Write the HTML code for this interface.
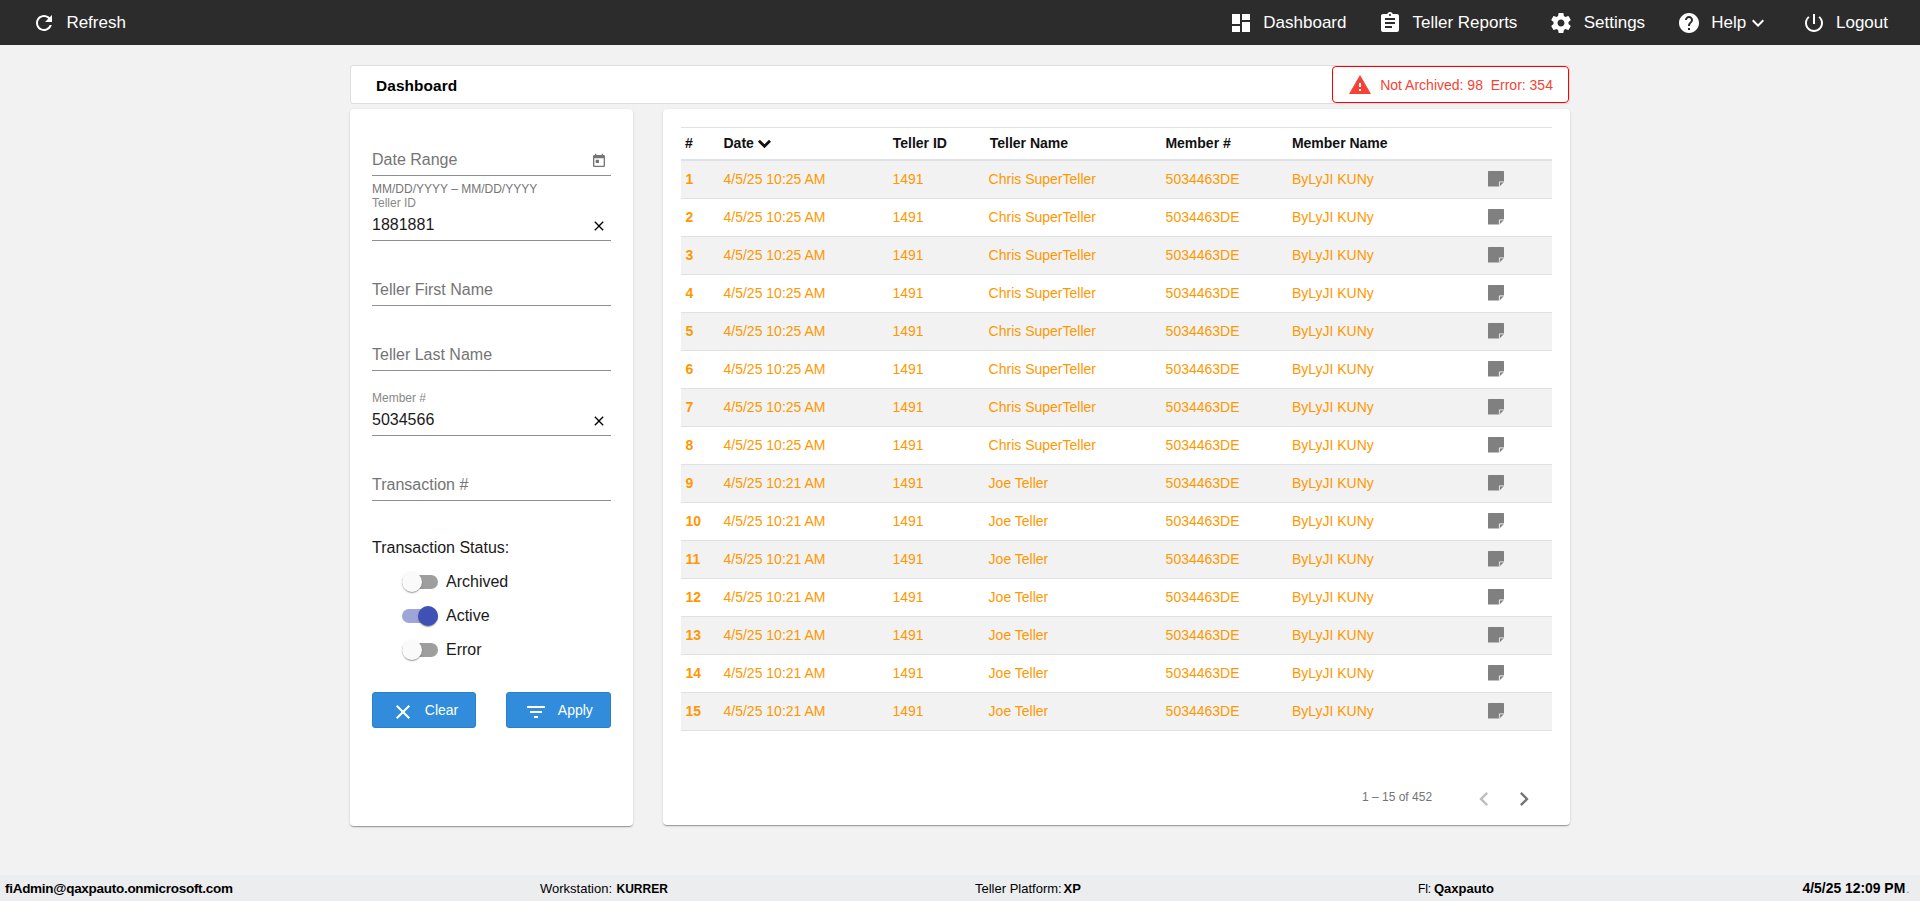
<!DOCTYPE html>
<html><head><meta charset="utf-8"><title>Dashboard</title>
<style>
html,body{margin:0;padding:0}
body{width:1920px;height:901px;overflow:hidden;background:#f2f2f2;position:relative;
 font-family:"Liberation Sans",sans-serif;}
.t{position:absolute;white-space:pre;}
.i{position:absolute;display:block}
.box{position:absolute;box-sizing:border-box}
.card{position:absolute;background:#fff;border-radius:4px;
 box-shadow:0 2px 1px -1px rgba(0,0,0,.2),0 1px 1px 0 rgba(0,0,0,.14),0 1px 3px 0 rgba(0,0,0,.12)}
.ul{position:absolute;left:372px;width:239px;height:1px;background:#8f8f8f}
.row{position:absolute;left:681px;width:871px;height:37px;border-bottom:1px solid #dee2e6}
.odd{background:#f2f2f2}
</style></head><body>

<div class="box" style="left:0;top:0;width:1920px;height:45px;background:#2c2c2c"></div>
<svg class="i" style="left:31.5px;top:10.7px;" width="24" height="24" viewBox="0 0 24 24"><path fill="#fff" d="M17.65 6.35C16.2 4.9 14.21 4 12 4c-4.42 0-7.99 3.58-7.99 8s3.57 8 7.99 8c3.73 0 6.84-2.55 7.73-6h-2.08c-.82 2.33-3.04 4-5.65 4-3.31 0-6-2.69-6-6s2.69-6 6-6c1.66 0 3.14.69 4.22 1.78L13 11h7V4l-2.35 2.35z"/></svg>
<div class="t" style="left:66.4px;top:13px;font-size:17px;line-height:19px;color:#fff;font-weight:400;">Refresh</div>
<svg class="i" style="left:1228.8px;top:10.8px;" width="24" height="24" viewBox="0 0 24 24"><path fill="#fff" d="M3 13h8V3H3v10zm0 8h8v-6H3v6zm10 0h8V11h-8v10zm0-18v6h8V3h-8z"/></svg>
<div class="t" style="left:1263.3px;top:13px;font-size:17px;line-height:19px;color:#fff;font-weight:400;">Dashboard</div>
<svg class="i" style="left:1378px;top:10.8px;" width="24" height="24" viewBox="0 0 24 24"><path fill="#fff" d="M19 3h-4.18C14.4 1.84 13.3 1 12 1c-1.3 0-2.4.84-2.82 2H5c-1.1 0-2 .9-2 2v14c0 1.1.9 2 2 2h14c1.1 0 2-.9 2-2V5c0-1.1-.9-2-2-2zm-7 0c.55 0 1 .45 1 1s-.45 1-1 1-1-.45-1-1 .45-1 1-1zm2 14H7v-2h7v2zm3-4H7v-2h10v2zm0-4H7V7h10v2z"/></svg>
<div class="t" style="left:1412.5px;top:13px;font-size:17px;line-height:19px;color:#fff;font-weight:400;">Teller Reports</div>
<svg class="i" style="left:1548.8px;top:10.9px;" width="24" height="24" viewBox="0 0 24 24"><path fill="#fff" d="M19.43 12.98c.04-.32.07-.64.07-.98s-.03-.66-.07-.98l2.11-1.65c.19-.15.24-.42.12-.64l-2-3.46c-.12-.22-.39-.3-.61-.22l-2.49 1c-.52-.4-1.08-.73-1.69-.98l-.38-2.65C14.46 2.18 14.25 2 14 2h-4c-.25 0-.46.18-.49.42l-.38 2.65c-.61.25-1.17.59-1.69.98l-2.49-1c-.23-.09-.49 0-.61.22l-2 3.46c-.13.22-.07.49.12.64l2.11 1.65c-.04.32-.07.65-.07.98s.03.66.07.98l-2.11 1.65c-.19.15-.24.42-.12.64l2 3.46c.12.22.39.3.61.22l2.49-1c.52.4 1.08.73 1.69.98l.38 2.65c.03.24.24.42.49.42h4c.25 0 .46-.18.49-.42l.38-2.65c.61-.25 1.17-.59 1.69-.98l2.49 1c.23.09.49 0 .61-.22l2-3.46c.12-.22.07-.49-.12-.64l-2.11-1.65zM12 15.5c-1.93 0-3.5-1.57-3.5-3.5s1.57-3.5 3.5-3.5 3.5 1.57 3.5 3.5-1.57 3.5-3.5 3.5z"/></svg>
<div class="t" style="left:1583.7px;top:13px;font-size:17px;line-height:19px;color:#fff;font-weight:400;">Settings</div>
<svg class="i" style="left:1676.5px;top:10.8px;" width="24" height="24" viewBox="0 0 24 24"><path fill="#fff" d="M12 2C6.48 2 2 6.48 2 12s4.48 10 10 10 10-4.48 10-10S17.52 2 12 2zm1 17h-2v-2h2v2zm2.07-7.75l-.9.92C13.45 12.9 13 13.5 13 15h-2v-.5c0-1.1.45-2.1 1.17-2.83l1.24-1.26c.37-.36.59-.86.59-1.41 0-1.1-.9-2-2-2s-2 .9-2 2H8c0-2.21 1.79-4 4-4s4 1.79 4 4c0 .88-.36 1.68-.93 2.25z"/></svg>
<div class="t" style="left:1711.2px;top:13px;font-size:17px;line-height:19px;color:#fff;font-weight:400;">Help</div>
<svg class="i" style="left:1746.2px;top:10.7px;" width="24" height="24" viewBox="0 0 24 24"><path fill="#fff" d="M16.59 8.59L12 13.17 7.41 8.59 6 10l6 6 6-6z"/></svg>
<svg class="i" style="left:1801.6px;top:10.8px;" width="24" height="24" viewBox="0 0 24 24"><path fill="#fff" d="M13 3h-2v10h2V3zm4.83 2.17l-1.42 1.42C17.99 7.86 19 9.81 19 12c0 3.87-3.13 7-7 7s-7-3.13-7-7c0-2.19 1.01-4.14 2.58-5.42L6.17 5.17C4.23 6.82 3 9.26 3 12c0 4.97 4.03 9 9 9s9-4.03 9-9c0-2.74-1.23-5.18-3.17-6.83z"/></svg>
<div class="t" style="left:1836px;top:13px;font-size:17px;line-height:19px;color:#fff;font-weight:400;">Logout</div>
<div class="box" style="left:350px;top:65px;width:1220px;height:39px;background:#fff;border:1px solid #dedede;border-radius:3px"></div>
<div class="t" style="left:376.1px;top:77px;font-size:15.4px;line-height:17px;color:#000;font-weight:700;letter-spacing:.08px">Dashboard</div>
<div class="box" style="left:1332px;top:66px;width:237px;height:37px;background:#fff;border:1px solid #ff0000;border-radius:4px"></div>
<svg class="i" style="left:1348.1px;top:73.4px;" width="24" height="24" viewBox="0 0 24 24"><path fill="#f44336" d="M1 21h22L12 2 1 21zm12-3h-2v-2h2v2zm0-4h-2v-4h2v4z"/></svg>
<div class="t" style="left:1380.2px;top:77px;font-size:14px;line-height:16px;color:#f44336;font-weight:400;">Not Archived: 98  Error: 354</div>
<div class="card" style="left:350px;top:109px;width:283px;height:717px"></div>
<div class="ul" style="top:175px"></div>
<div class="ul" style="top:240px"></div>
<div class="ul" style="top:305px"></div>
<div class="ul" style="top:370px"></div>
<div class="ul" style="top:435px"></div>
<div class="ul" style="top:500px"></div>
<div class="t" style="left:372px;top:151px;font-size:16px;line-height:17px;color:#757575;font-weight:400;">Date Range</div>
<svg class="i" style="left:591px;top:153.2px;" width="16" height="16" viewBox="0 0 24 24"><path fill="#757575" d="M19 3h-1V1h-2v2H8V1H6v2H5c-1.11 0-1.99.9-1.99 2L3 19c0 1.1.89 2 2 2h14c1.1 0 2-.9 2-2V5c0-1.1-.9-2-2-2zm0 16H5V8h14v11zM7 10h5v5H7z"/></svg>
<div class="t" style="left:372px;top:182px;font-size:12px;line-height:14px;color:#757575;font-weight:400;">MM/DD/YYYY – MM/DD/YYYY</div>
<div class="t" style="left:372px;top:196px;font-size:12px;line-height:14px;color:#888;font-weight:400;">Teller ID</div>
<div class="t" style="left:372px;top:216px;font-size:16px;line-height:17px;color:#1a1a1a;font-weight:400;">1881881</div>
<svg class="i" style="left:590.9px;top:217.9px;" width="16" height="16" viewBox="0 0 24 24"><path fill="#000" d="M19 6.41L17.59 5 12 10.59 6.41 5 5 6.41 10.59 12 5 17.59 6.41 19 12 13.41 17.59 19 19 17.59 13.41 12z"/></svg>
<div class="t" style="left:372px;top:281px;font-size:16px;line-height:17px;color:#757575;font-weight:400;">Teller First Name</div>
<div class="t" style="left:372px;top:346px;font-size:16px;line-height:17px;color:#757575;font-weight:400;">Teller Last Name</div>
<div class="t" style="left:372px;top:391px;font-size:12px;line-height:14px;color:#888;font-weight:400;">Member #</div>
<div class="t" style="left:372px;top:411px;font-size:16px;line-height:17px;color:#1a1a1a;font-weight:400;">5034566</div>
<svg class="i" style="left:590.9px;top:412.9px;" width="16" height="16" viewBox="0 0 24 24"><path fill="#000" d="M19 6.41L17.59 5 12 10.59 6.41 5 5 6.41 10.59 12 5 17.59 6.41 19 12 13.41 17.59 19 19 17.59 13.41 12z"/></svg>
<div class="t" style="left:372px;top:476px;font-size:16px;line-height:17px;color:#757575;font-weight:400;">Transaction #</div>
<div class="t" style="left:372px;top:539px;font-size:16px;line-height:17px;color:#1a1a1a;font-weight:400;">Transaction Status:</div>
<div class="box" style="left:402px;top:575px;width:36px;height:14px;border-radius:7px;background:#9e9e9e"></div><div class="box" style="left:402px;top:572px;width:20px;height:20px;border-radius:50%;background:#fafafa;box-shadow:0 2px 1px -1px rgba(0,0,0,.2),0 1px 1px 0 rgba(0,0,0,.14),0 1px 3px 0 rgba(0,0,0,.12)"></div>
<div class="t" style="left:446px;top:573px;font-size:16px;line-height:17px;color:#1a1a1a;font-weight:400;">Archived</div>
<div class="box" style="left:402px;top:609px;width:36px;height:14px;border-radius:7px;background:#9ea5da"></div><div class="box" style="left:418px;top:606px;width:20px;height:20px;border-radius:50%;background:#3f51b5;box-shadow:0 2px 1px -1px rgba(0,0,0,.2),0 1px 1px 0 rgba(0,0,0,.14),0 1px 3px 0 rgba(0,0,0,.12)"></div>
<div class="t" style="left:446px;top:607px;font-size:16px;line-height:17px;color:#1a1a1a;font-weight:400;">Active</div>
<div class="box" style="left:402px;top:643px;width:36px;height:14px;border-radius:7px;background:#9e9e9e"></div><div class="box" style="left:402px;top:640px;width:20px;height:20px;border-radius:50%;background:#fafafa;box-shadow:0 2px 1px -1px rgba(0,0,0,.2),0 1px 1px 0 rgba(0,0,0,.14),0 1px 3px 0 rgba(0,0,0,.12)"></div>
<div class="t" style="left:446px;top:641px;font-size:16px;line-height:17px;color:#1a1a1a;font-weight:400;">Error</div>
<div class="box" style="left:372px;top:692px;width:104px;height:36px;background:#318ddc;border:1px solid #2b80ca;border-radius:3px"></div>
<svg class="i" style="left:390.6px;top:700.1px;" width="24" height="24" viewBox="0 0 24 24"><path fill="#fff" d="M19 6.41L17.59 5 12 10.59 6.41 5 5 6.41 10.59 12 5 17.59 6.41 19 12 13.41 17.59 19 19 17.59 13.41 12z"/></svg>
<div class="t" style="left:424.8px;top:702px;font-size:14px;line-height:16px;color:#fff;font-weight:400;">Clear</div>
<div class="box" style="left:506px;top:692px;width:105px;height:36px;background:#318ddc;border:1px solid #2b80ca;border-radius:3px"></div>
<svg class="i" style="left:523.8px;top:700px;" width="24" height="24" viewBox="0 0 24 24"><path fill="#fff" d="M10 18h4v-2h-4v2zM3 6v2h18V6H3zm3 7h12v-2H6v2z"/></svg>
<div class="t" style="left:557.8px;top:702px;font-size:14px;line-height:16px;color:#fff;font-weight:400;">Apply</div>
<div class="card" style="left:663px;top:109px;width:907px;height:716px"></div>
<div class="box" style="left:681px;top:127px;width:871px;height:1px;background:#dee2e6"></div>
<div class="box" style="left:681px;top:159px;width:871px;height:2px;background:#dee2e6"></div>
<div class="t" style="left:685px;top:135px;font-size:14px;line-height:16px;color:#111;font-weight:700;">#</div>
<div class="t" style="left:723.5px;top:135px;font-size:14px;line-height:16px;color:#111;font-weight:700;">Date</div>
<svg class="i" style="left:757px;top:138px" width="15" height="12" viewBox="0 0 15 12"><path d="M1.9 2.7 L7.45 8.2 L13 2.7" fill="none" stroke="#111" stroke-width="2.8"/></svg>
<div class="t" style="left:892.7px;top:135px;font-size:14px;line-height:16px;color:#111;font-weight:700;">Teller ID</div>
<div class="t" style="left:989.7px;top:135px;font-size:14px;line-height:16px;color:#111;font-weight:700;">Teller Name</div>
<div class="t" style="left:1165.4px;top:135px;font-size:14px;line-height:16px;color:#111;font-weight:700;">Member #</div>
<div class="t" style="left:1291.9px;top:135px;font-size:14px;line-height:16px;color:#111;font-weight:700;">Member Name</div>
<div class="row odd" style="top:161px"></div>
<div class="t" style="left:685.4px;top:171px;font-size:14px;line-height:16px;color:#ff9800;font-weight:700;">1</div>
<div class="t" style="left:723.5px;top:171px;font-size:14px;line-height:16px;color:#ff9800;font-weight:400;">4/5/25 10:25 AM</div>
<div class="t" style="left:892.5px;top:171px;font-size:14px;line-height:16px;color:#ff9800;font-weight:400;">1491</div>
<div class="t" style="left:988.6px;top:171px;font-size:14px;line-height:16px;color:#ff9800;font-weight:400;">Chris SuperTeller</div>
<div class="t" style="left:1165.6px;top:171px;font-size:14px;line-height:16px;color:#ff9800;font-weight:400;">5034463DE</div>
<div class="t" style="left:1291.9px;top:171px;font-size:14px;line-height:16px;color:#ff9800;font-weight:400;">ByLyJI KUNy</div>
<svg class="i" style="left:1488px;top:170.8px" width="16" height="16" viewBox="0 0 16 16"><path fill="#808080" d="M0.6 0h14.8a.6.6 0 0 1 .6.6V11L11.5 15.5H0.6a.6.6 0 0 1-.6-.6V.6a.6.6 0 0 1 .6-.6z"/><path fill="none" stroke="#f2f2f2" stroke-width="0.9" d="M11.4 15.6V10.9H16"/></svg>
<div class="row" style="top:199px"></div>
<div class="t" style="left:685.4px;top:209px;font-size:14px;line-height:16px;color:#ff9800;font-weight:700;">2</div>
<div class="t" style="left:723.5px;top:209px;font-size:14px;line-height:16px;color:#ff9800;font-weight:400;">4/5/25 10:25 AM</div>
<div class="t" style="left:892.5px;top:209px;font-size:14px;line-height:16px;color:#ff9800;font-weight:400;">1491</div>
<div class="t" style="left:988.6px;top:209px;font-size:14px;line-height:16px;color:#ff9800;font-weight:400;">Chris SuperTeller</div>
<div class="t" style="left:1165.6px;top:209px;font-size:14px;line-height:16px;color:#ff9800;font-weight:400;">5034463DE</div>
<div class="t" style="left:1291.9px;top:209px;font-size:14px;line-height:16px;color:#ff9800;font-weight:400;">ByLyJI KUNy</div>
<svg class="i" style="left:1488px;top:208.8px" width="16" height="16" viewBox="0 0 16 16"><path fill="#808080" d="M0.6 0h14.8a.6.6 0 0 1 .6.6V11L11.5 15.5H0.6a.6.6 0 0 1-.6-.6V.6a.6.6 0 0 1 .6-.6z"/><path fill="none" stroke="#fff" stroke-width="0.9" d="M11.4 15.6V10.9H16"/></svg>
<div class="row odd" style="top:237px"></div>
<div class="t" style="left:685.4px;top:247px;font-size:14px;line-height:16px;color:#ff9800;font-weight:700;">3</div>
<div class="t" style="left:723.5px;top:247px;font-size:14px;line-height:16px;color:#ff9800;font-weight:400;">4/5/25 10:25 AM</div>
<div class="t" style="left:892.5px;top:247px;font-size:14px;line-height:16px;color:#ff9800;font-weight:400;">1491</div>
<div class="t" style="left:988.6px;top:247px;font-size:14px;line-height:16px;color:#ff9800;font-weight:400;">Chris SuperTeller</div>
<div class="t" style="left:1165.6px;top:247px;font-size:14px;line-height:16px;color:#ff9800;font-weight:400;">5034463DE</div>
<div class="t" style="left:1291.9px;top:247px;font-size:14px;line-height:16px;color:#ff9800;font-weight:400;">ByLyJI KUNy</div>
<svg class="i" style="left:1488px;top:246.8px" width="16" height="16" viewBox="0 0 16 16"><path fill="#808080" d="M0.6 0h14.8a.6.6 0 0 1 .6.6V11L11.5 15.5H0.6a.6.6 0 0 1-.6-.6V.6a.6.6 0 0 1 .6-.6z"/><path fill="none" stroke="#f2f2f2" stroke-width="0.9" d="M11.4 15.6V10.9H16"/></svg>
<div class="row" style="top:275px"></div>
<div class="t" style="left:685.4px;top:285px;font-size:14px;line-height:16px;color:#ff9800;font-weight:700;">4</div>
<div class="t" style="left:723.5px;top:285px;font-size:14px;line-height:16px;color:#ff9800;font-weight:400;">4/5/25 10:25 AM</div>
<div class="t" style="left:892.5px;top:285px;font-size:14px;line-height:16px;color:#ff9800;font-weight:400;">1491</div>
<div class="t" style="left:988.6px;top:285px;font-size:14px;line-height:16px;color:#ff9800;font-weight:400;">Chris SuperTeller</div>
<div class="t" style="left:1165.6px;top:285px;font-size:14px;line-height:16px;color:#ff9800;font-weight:400;">5034463DE</div>
<div class="t" style="left:1291.9px;top:285px;font-size:14px;line-height:16px;color:#ff9800;font-weight:400;">ByLyJI KUNy</div>
<svg class="i" style="left:1488px;top:284.8px" width="16" height="16" viewBox="0 0 16 16"><path fill="#808080" d="M0.6 0h14.8a.6.6 0 0 1 .6.6V11L11.5 15.5H0.6a.6.6 0 0 1-.6-.6V.6a.6.6 0 0 1 .6-.6z"/><path fill="none" stroke="#fff" stroke-width="0.9" d="M11.4 15.6V10.9H16"/></svg>
<div class="row odd" style="top:313px"></div>
<div class="t" style="left:685.4px;top:323px;font-size:14px;line-height:16px;color:#ff9800;font-weight:700;">5</div>
<div class="t" style="left:723.5px;top:323px;font-size:14px;line-height:16px;color:#ff9800;font-weight:400;">4/5/25 10:25 AM</div>
<div class="t" style="left:892.5px;top:323px;font-size:14px;line-height:16px;color:#ff9800;font-weight:400;">1491</div>
<div class="t" style="left:988.6px;top:323px;font-size:14px;line-height:16px;color:#ff9800;font-weight:400;">Chris SuperTeller</div>
<div class="t" style="left:1165.6px;top:323px;font-size:14px;line-height:16px;color:#ff9800;font-weight:400;">5034463DE</div>
<div class="t" style="left:1291.9px;top:323px;font-size:14px;line-height:16px;color:#ff9800;font-weight:400;">ByLyJI KUNy</div>
<svg class="i" style="left:1488px;top:322.8px" width="16" height="16" viewBox="0 0 16 16"><path fill="#808080" d="M0.6 0h14.8a.6.6 0 0 1 .6.6V11L11.5 15.5H0.6a.6.6 0 0 1-.6-.6V.6a.6.6 0 0 1 .6-.6z"/><path fill="none" stroke="#f2f2f2" stroke-width="0.9" d="M11.4 15.6V10.9H16"/></svg>
<div class="row" style="top:351px"></div>
<div class="t" style="left:685.4px;top:361px;font-size:14px;line-height:16px;color:#ff9800;font-weight:700;">6</div>
<div class="t" style="left:723.5px;top:361px;font-size:14px;line-height:16px;color:#ff9800;font-weight:400;">4/5/25 10:25 AM</div>
<div class="t" style="left:892.5px;top:361px;font-size:14px;line-height:16px;color:#ff9800;font-weight:400;">1491</div>
<div class="t" style="left:988.6px;top:361px;font-size:14px;line-height:16px;color:#ff9800;font-weight:400;">Chris SuperTeller</div>
<div class="t" style="left:1165.6px;top:361px;font-size:14px;line-height:16px;color:#ff9800;font-weight:400;">5034463DE</div>
<div class="t" style="left:1291.9px;top:361px;font-size:14px;line-height:16px;color:#ff9800;font-weight:400;">ByLyJI KUNy</div>
<svg class="i" style="left:1488px;top:360.8px" width="16" height="16" viewBox="0 0 16 16"><path fill="#808080" d="M0.6 0h14.8a.6.6 0 0 1 .6.6V11L11.5 15.5H0.6a.6.6 0 0 1-.6-.6V.6a.6.6 0 0 1 .6-.6z"/><path fill="none" stroke="#fff" stroke-width="0.9" d="M11.4 15.6V10.9H16"/></svg>
<div class="row odd" style="top:389px"></div>
<div class="t" style="left:685.4px;top:399px;font-size:14px;line-height:16px;color:#ff9800;font-weight:700;">7</div>
<div class="t" style="left:723.5px;top:399px;font-size:14px;line-height:16px;color:#ff9800;font-weight:400;">4/5/25 10:25 AM</div>
<div class="t" style="left:892.5px;top:399px;font-size:14px;line-height:16px;color:#ff9800;font-weight:400;">1491</div>
<div class="t" style="left:988.6px;top:399px;font-size:14px;line-height:16px;color:#ff9800;font-weight:400;">Chris SuperTeller</div>
<div class="t" style="left:1165.6px;top:399px;font-size:14px;line-height:16px;color:#ff9800;font-weight:400;">5034463DE</div>
<div class="t" style="left:1291.9px;top:399px;font-size:14px;line-height:16px;color:#ff9800;font-weight:400;">ByLyJI KUNy</div>
<svg class="i" style="left:1488px;top:398.8px" width="16" height="16" viewBox="0 0 16 16"><path fill="#808080" d="M0.6 0h14.8a.6.6 0 0 1 .6.6V11L11.5 15.5H0.6a.6.6 0 0 1-.6-.6V.6a.6.6 0 0 1 .6-.6z"/><path fill="none" stroke="#f2f2f2" stroke-width="0.9" d="M11.4 15.6V10.9H16"/></svg>
<div class="row" style="top:427px"></div>
<div class="t" style="left:685.4px;top:437px;font-size:14px;line-height:16px;color:#ff9800;font-weight:700;">8</div>
<div class="t" style="left:723.5px;top:437px;font-size:14px;line-height:16px;color:#ff9800;font-weight:400;">4/5/25 10:25 AM</div>
<div class="t" style="left:892.5px;top:437px;font-size:14px;line-height:16px;color:#ff9800;font-weight:400;">1491</div>
<div class="t" style="left:988.6px;top:437px;font-size:14px;line-height:16px;color:#ff9800;font-weight:400;">Chris SuperTeller</div>
<div class="t" style="left:1165.6px;top:437px;font-size:14px;line-height:16px;color:#ff9800;font-weight:400;">5034463DE</div>
<div class="t" style="left:1291.9px;top:437px;font-size:14px;line-height:16px;color:#ff9800;font-weight:400;">ByLyJI KUNy</div>
<svg class="i" style="left:1488px;top:436.8px" width="16" height="16" viewBox="0 0 16 16"><path fill="#808080" d="M0.6 0h14.8a.6.6 0 0 1 .6.6V11L11.5 15.5H0.6a.6.6 0 0 1-.6-.6V.6a.6.6 0 0 1 .6-.6z"/><path fill="none" stroke="#fff" stroke-width="0.9" d="M11.4 15.6V10.9H16"/></svg>
<div class="row odd" style="top:465px"></div>
<div class="t" style="left:685.4px;top:475px;font-size:14px;line-height:16px;color:#ff9800;font-weight:700;">9</div>
<div class="t" style="left:723.5px;top:475px;font-size:14px;line-height:16px;color:#ff9800;font-weight:400;">4/5/25 10:21 AM</div>
<div class="t" style="left:892.5px;top:475px;font-size:14px;line-height:16px;color:#ff9800;font-weight:400;">1491</div>
<div class="t" style="left:988.6px;top:475px;font-size:14px;line-height:16px;color:#ff9800;font-weight:400;">Joe Teller</div>
<div class="t" style="left:1165.6px;top:475px;font-size:14px;line-height:16px;color:#ff9800;font-weight:400;">5034463DE</div>
<div class="t" style="left:1291.9px;top:475px;font-size:14px;line-height:16px;color:#ff9800;font-weight:400;">ByLyJI KUNy</div>
<svg class="i" style="left:1488px;top:474.8px" width="16" height="16" viewBox="0 0 16 16"><path fill="#808080" d="M0.6 0h14.8a.6.6 0 0 1 .6.6V11L11.5 15.5H0.6a.6.6 0 0 1-.6-.6V.6a.6.6 0 0 1 .6-.6z"/><path fill="none" stroke="#f2f2f2" stroke-width="0.9" d="M11.4 15.6V10.9H16"/></svg>
<div class="row" style="top:503px"></div>
<div class="t" style="left:685.4px;top:513px;font-size:14px;line-height:16px;color:#ff9800;font-weight:700;">10</div>
<div class="t" style="left:723.5px;top:513px;font-size:14px;line-height:16px;color:#ff9800;font-weight:400;">4/5/25 10:21 AM</div>
<div class="t" style="left:892.5px;top:513px;font-size:14px;line-height:16px;color:#ff9800;font-weight:400;">1491</div>
<div class="t" style="left:988.6px;top:513px;font-size:14px;line-height:16px;color:#ff9800;font-weight:400;">Joe Teller</div>
<div class="t" style="left:1165.6px;top:513px;font-size:14px;line-height:16px;color:#ff9800;font-weight:400;">5034463DE</div>
<div class="t" style="left:1291.9px;top:513px;font-size:14px;line-height:16px;color:#ff9800;font-weight:400;">ByLyJI KUNy</div>
<svg class="i" style="left:1488px;top:512.8px" width="16" height="16" viewBox="0 0 16 16"><path fill="#808080" d="M0.6 0h14.8a.6.6 0 0 1 .6.6V11L11.5 15.5H0.6a.6.6 0 0 1-.6-.6V.6a.6.6 0 0 1 .6-.6z"/><path fill="none" stroke="#fff" stroke-width="0.9" d="M11.4 15.6V10.9H16"/></svg>
<div class="row odd" style="top:541px"></div>
<div class="t" style="left:685.4px;top:551px;font-size:14px;line-height:16px;color:#ff9800;font-weight:700;">11</div>
<div class="t" style="left:723.5px;top:551px;font-size:14px;line-height:16px;color:#ff9800;font-weight:400;">4/5/25 10:21 AM</div>
<div class="t" style="left:892.5px;top:551px;font-size:14px;line-height:16px;color:#ff9800;font-weight:400;">1491</div>
<div class="t" style="left:988.6px;top:551px;font-size:14px;line-height:16px;color:#ff9800;font-weight:400;">Joe Teller</div>
<div class="t" style="left:1165.6px;top:551px;font-size:14px;line-height:16px;color:#ff9800;font-weight:400;">5034463DE</div>
<div class="t" style="left:1291.9px;top:551px;font-size:14px;line-height:16px;color:#ff9800;font-weight:400;">ByLyJI KUNy</div>
<svg class="i" style="left:1488px;top:550.8px" width="16" height="16" viewBox="0 0 16 16"><path fill="#808080" d="M0.6 0h14.8a.6.6 0 0 1 .6.6V11L11.5 15.5H0.6a.6.6 0 0 1-.6-.6V.6a.6.6 0 0 1 .6-.6z"/><path fill="none" stroke="#f2f2f2" stroke-width="0.9" d="M11.4 15.6V10.9H16"/></svg>
<div class="row" style="top:579px"></div>
<div class="t" style="left:685.4px;top:589px;font-size:14px;line-height:16px;color:#ff9800;font-weight:700;">12</div>
<div class="t" style="left:723.5px;top:589px;font-size:14px;line-height:16px;color:#ff9800;font-weight:400;">4/5/25 10:21 AM</div>
<div class="t" style="left:892.5px;top:589px;font-size:14px;line-height:16px;color:#ff9800;font-weight:400;">1491</div>
<div class="t" style="left:988.6px;top:589px;font-size:14px;line-height:16px;color:#ff9800;font-weight:400;">Joe Teller</div>
<div class="t" style="left:1165.6px;top:589px;font-size:14px;line-height:16px;color:#ff9800;font-weight:400;">5034463DE</div>
<div class="t" style="left:1291.9px;top:589px;font-size:14px;line-height:16px;color:#ff9800;font-weight:400;">ByLyJI KUNy</div>
<svg class="i" style="left:1488px;top:588.8px" width="16" height="16" viewBox="0 0 16 16"><path fill="#808080" d="M0.6 0h14.8a.6.6 0 0 1 .6.6V11L11.5 15.5H0.6a.6.6 0 0 1-.6-.6V.6a.6.6 0 0 1 .6-.6z"/><path fill="none" stroke="#fff" stroke-width="0.9" d="M11.4 15.6V10.9H16"/></svg>
<div class="row odd" style="top:617px"></div>
<div class="t" style="left:685.4px;top:627px;font-size:14px;line-height:16px;color:#ff9800;font-weight:700;">13</div>
<div class="t" style="left:723.5px;top:627px;font-size:14px;line-height:16px;color:#ff9800;font-weight:400;">4/5/25 10:21 AM</div>
<div class="t" style="left:892.5px;top:627px;font-size:14px;line-height:16px;color:#ff9800;font-weight:400;">1491</div>
<div class="t" style="left:988.6px;top:627px;font-size:14px;line-height:16px;color:#ff9800;font-weight:400;">Joe Teller</div>
<div class="t" style="left:1165.6px;top:627px;font-size:14px;line-height:16px;color:#ff9800;font-weight:400;">5034463DE</div>
<div class="t" style="left:1291.9px;top:627px;font-size:14px;line-height:16px;color:#ff9800;font-weight:400;">ByLyJI KUNy</div>
<svg class="i" style="left:1488px;top:626.8px" width="16" height="16" viewBox="0 0 16 16"><path fill="#808080" d="M0.6 0h14.8a.6.6 0 0 1 .6.6V11L11.5 15.5H0.6a.6.6 0 0 1-.6-.6V.6a.6.6 0 0 1 .6-.6z"/><path fill="none" stroke="#f2f2f2" stroke-width="0.9" d="M11.4 15.6V10.9H16"/></svg>
<div class="row" style="top:655px"></div>
<div class="t" style="left:685.4px;top:665px;font-size:14px;line-height:16px;color:#ff9800;font-weight:700;">14</div>
<div class="t" style="left:723.5px;top:665px;font-size:14px;line-height:16px;color:#ff9800;font-weight:400;">4/5/25 10:21 AM</div>
<div class="t" style="left:892.5px;top:665px;font-size:14px;line-height:16px;color:#ff9800;font-weight:400;">1491</div>
<div class="t" style="left:988.6px;top:665px;font-size:14px;line-height:16px;color:#ff9800;font-weight:400;">Joe Teller</div>
<div class="t" style="left:1165.6px;top:665px;font-size:14px;line-height:16px;color:#ff9800;font-weight:400;">5034463DE</div>
<div class="t" style="left:1291.9px;top:665px;font-size:14px;line-height:16px;color:#ff9800;font-weight:400;">ByLyJI KUNy</div>
<svg class="i" style="left:1488px;top:664.8px" width="16" height="16" viewBox="0 0 16 16"><path fill="#808080" d="M0.6 0h14.8a.6.6 0 0 1 .6.6V11L11.5 15.5H0.6a.6.6 0 0 1-.6-.6V.6a.6.6 0 0 1 .6-.6z"/><path fill="none" stroke="#fff" stroke-width="0.9" d="M11.4 15.6V10.9H16"/></svg>
<div class="row odd" style="top:693px"></div>
<div class="t" style="left:685.4px;top:703px;font-size:14px;line-height:16px;color:#ff9800;font-weight:700;">15</div>
<div class="t" style="left:723.5px;top:703px;font-size:14px;line-height:16px;color:#ff9800;font-weight:400;">4/5/25 10:21 AM</div>
<div class="t" style="left:892.5px;top:703px;font-size:14px;line-height:16px;color:#ff9800;font-weight:400;">1491</div>
<div class="t" style="left:988.6px;top:703px;font-size:14px;line-height:16px;color:#ff9800;font-weight:400;">Joe Teller</div>
<div class="t" style="left:1165.6px;top:703px;font-size:14px;line-height:16px;color:#ff9800;font-weight:400;">5034463DE</div>
<div class="t" style="left:1291.9px;top:703px;font-size:14px;line-height:16px;color:#ff9800;font-weight:400;">ByLyJI KUNy</div>
<svg class="i" style="left:1488px;top:702.8px" width="16" height="16" viewBox="0 0 16 16"><path fill="#808080" d="M0.6 0h14.8a.6.6 0 0 1 .6.6V11L11.5 15.5H0.6a.6.6 0 0 1-.6-.6V.6a.6.6 0 0 1 .6-.6z"/><path fill="none" stroke="#f2f2f2" stroke-width="0.9" d="M11.4 15.6V10.9H16"/></svg>
<div class="t" style="left:1362px;top:790px;font-size:12px;line-height:14px;color:#757575;font-weight:400;">1 – 15 of 452</div>
<svg class="i" style="left:1470px;top:785.3px;" width="28" height="28" viewBox="0 0 24 24"><path fill="#bdbdbd" d="M15.41 7.41L14 6l-6 6 6 6 1.41-1.41L10.83 12z"/></svg>
<svg class="i" style="left:1510px;top:785.3px;" width="28" height="28" viewBox="0 0 24 24"><path fill="#757575" d="M10 6L8.59 7.41 13.17 12l-4.58 4.59L10 18l6-6z"/></svg>
<div class="box" style="left:0;top:875px;width:1920px;height:26px;background:#ecedef"></div>
<div class="t" style="left:5px;top:881px;font-size:13.5px;line-height:15px;color:#000;font-weight:700;letter-spacing:-.28px">fiAdmin@qaxpauto.onmicrosoft.com</div>
<div class="t" style="left:540px;top:881px;font-size:13px;line-height:15px;color:#000;font-weight:400;">Workstation: </div>
<div class="t" style="left:616.5px;top:882px;font-size:12px;line-height:14px;color:#000;font-weight:700;">KURRER</div>
<div class="t" style="left:975px;top:881px;font-size:13px;line-height:15px;color:#000;font-weight:400;">Teller Platform: </div>
<div class="t" style="left:1063.5px;top:881px;font-size:13px;line-height:15px;color:#000;font-weight:700;">XP</div>
<div class="t" style="left:1418px;top:882px;font-size:12px;line-height:14px;color:#000;font-weight:400;letter-spacing:-.4px">FI: </div>
<div class="t" style="left:1434px;top:881px;font-size:13px;line-height:15px;color:#000;font-weight:700;">Qaxpauto</div>
<div class="t" style="left:1802.5px;top:880px;font-size:13.9px;line-height:16px;color:#000;font-weight:700;">4/5/25 12:09 PM</div>
<div class="t" style="left:1906px;top:881px;font-size:13px;line-height:15px;color:#999;font-weight:400;">.</div>
</body></html>
